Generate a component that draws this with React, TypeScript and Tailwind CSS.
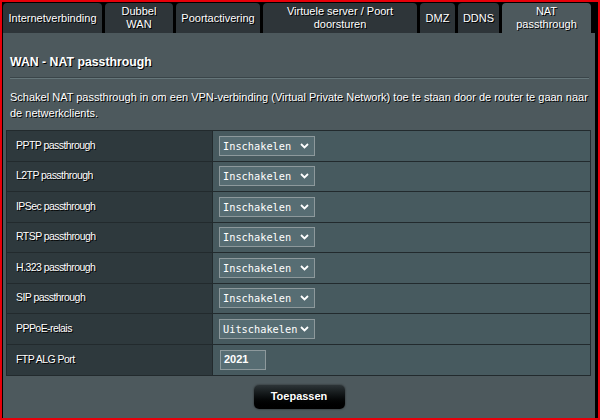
const tabs = [
  { label: "Internetverbinding", w: "w-[99px]" },
  { label: "Dubbel WAN", w: "w-[68px]" },
  { label: "Poortactivering", w: "w-[84px]" },
  { label: "Virtuele server / Poort doorsturen", w: "w-[154px]" },
  { label: "DMZ", w: "w-[35px]" },
  { label: "DDNS", w: "w-[41px]" },
  { label: "NAT passthrough", w: "w-[89px]", active: true },
];

const rows = [
  { label: "PPTP passthrough", value: "Inschakelen" },
  { label: "L2TP passthrough", value: "Inschakelen" },
  { label: "IPSec passthrough", value: "Inschakelen" },
  { label: "RTSP passthrough", value: "Inschakelen" },
  { label: "H.323 passthrough", value: "Inschakelen" },
  { label: "SIP passthrough", value: "Inschakelen" },
  { label: "PPPoE-relais", value: "Uitschakelen" },
];

const shadow = "[text-shadow:1px_1px_0_#000]";

function Chevron() {
  return (
    <svg width="9" height="6" viewBox="0 0 9 6" className="shrink-0">
      <path d="M1 1 L4.5 4.5 L8 1" fill="none" stroke="#fff" strokeWidth="1.8" />
    </svg>
  );
}

function Select({ value }: { value: string }) {
  return (
    <div className="flex h-[20px] w-[96px] items-center justify-between border border-[#8d999c] bg-[#576d73] pl-[3px] pr-[5px]">
      <span className="font-['DejaVu_Sans_Mono',monospace] text-[10.3px] leading-none text-white">
        {value}
      </span>
      <Chevron />
    </div>
  );
}

function Label({ children }: { children: string }) {
  return (
    <div className={`flex w-[205px] items-center bg-[#2e393d] pl-[9px] text-[10.5px] tracking-[-0.55px] ${shadow}`}>
      {children}
    </div>
  );
}

export default function App() {
  return (
    <div className="h-[420px] w-[600px] overflow-hidden border-2 border-[#e8000a] bg-black font-['Liberation_Sans',Arial,sans-serif] text-white">
      <div className="flex h-full flex-col pl-[1px] pt-[1px]">
        <div className="flex h-[30px] gap-[3px]">
          {tabs.map((t) => (
            <div
              key={t.label}
              className={`${t.w} flex items-center justify-center rounded-t-[4px] px-[6px] text-center text-[11px] leading-[13px] ${shadow} ${
                t.active ? "bg-[#4d595d]" : "bg-[#2e3539]"
              }`}
            >
              {t.label}
            </div>
          ))}
        </div>
        <div className="flex-1 w-[592px] bg-[#4d595d] pt-[22px]">
          <h1 className={`ml-[7px] text-[12.3px] font-bold leading-[15px] ${shadow}`}>
            WAN - NAT passthrough
          </h1>
          <div className="ml-[7px] mr-[6px] mt-[7px] h-[1px] bg-[#3a4549] shadow-[0_1px_0_#66767a]" />
          <p className={`ml-[7px] mr-[6px] mt-[11px] text-[11px] leading-[16px] ${shadow}`}>
            Schakel NAT passthrough in om een VPN-verbinding (Virtual Private Network) toe te staan door de router te gaan naar de
            netwerkclients.
          </p>
          <div className="ml-[3px] mr-[4px] mt-[9px] border border-[#222a2d]">
            {rows.map((r) => (
              <div key={r.label} className="flex h-[30.5px] border-b border-[#222a2d]">
                <Label>{r.label}</Label>
                <div className="flex flex-1 items-center border-l border-[#222a2d] bg-[#475a5f] pl-[6px]">
                  <Select value={r.value} />
                </div>
              </div>
            ))}
            <div className="flex h-[30px]">
              <Label>FTP ALG Port</Label>
              <div className="flex flex-1 items-center border-l border-[#222a2d] bg-[#475a5f] pl-[7px]">
                <div className="flex h-[20px] w-[46px] items-center border border-[#8d999c] bg-[#576d73] pl-[3px] text-[11px] font-bold">
                  2021
                </div>
              </div>
            </div>
          </div>
          <div className="mt-[9px] flex justify-center">
            <button className={`h-[24px] w-[91px] rounded-[5px] bg-gradient-to-b from-[#2d3538] to-[#000] text-[11px] font-bold shadow-[0_0_2px_#222] ${shadow}`}>
              Toepassen
            </button>
          </div>
        </div>
      </div>
    </div>
  );
}
